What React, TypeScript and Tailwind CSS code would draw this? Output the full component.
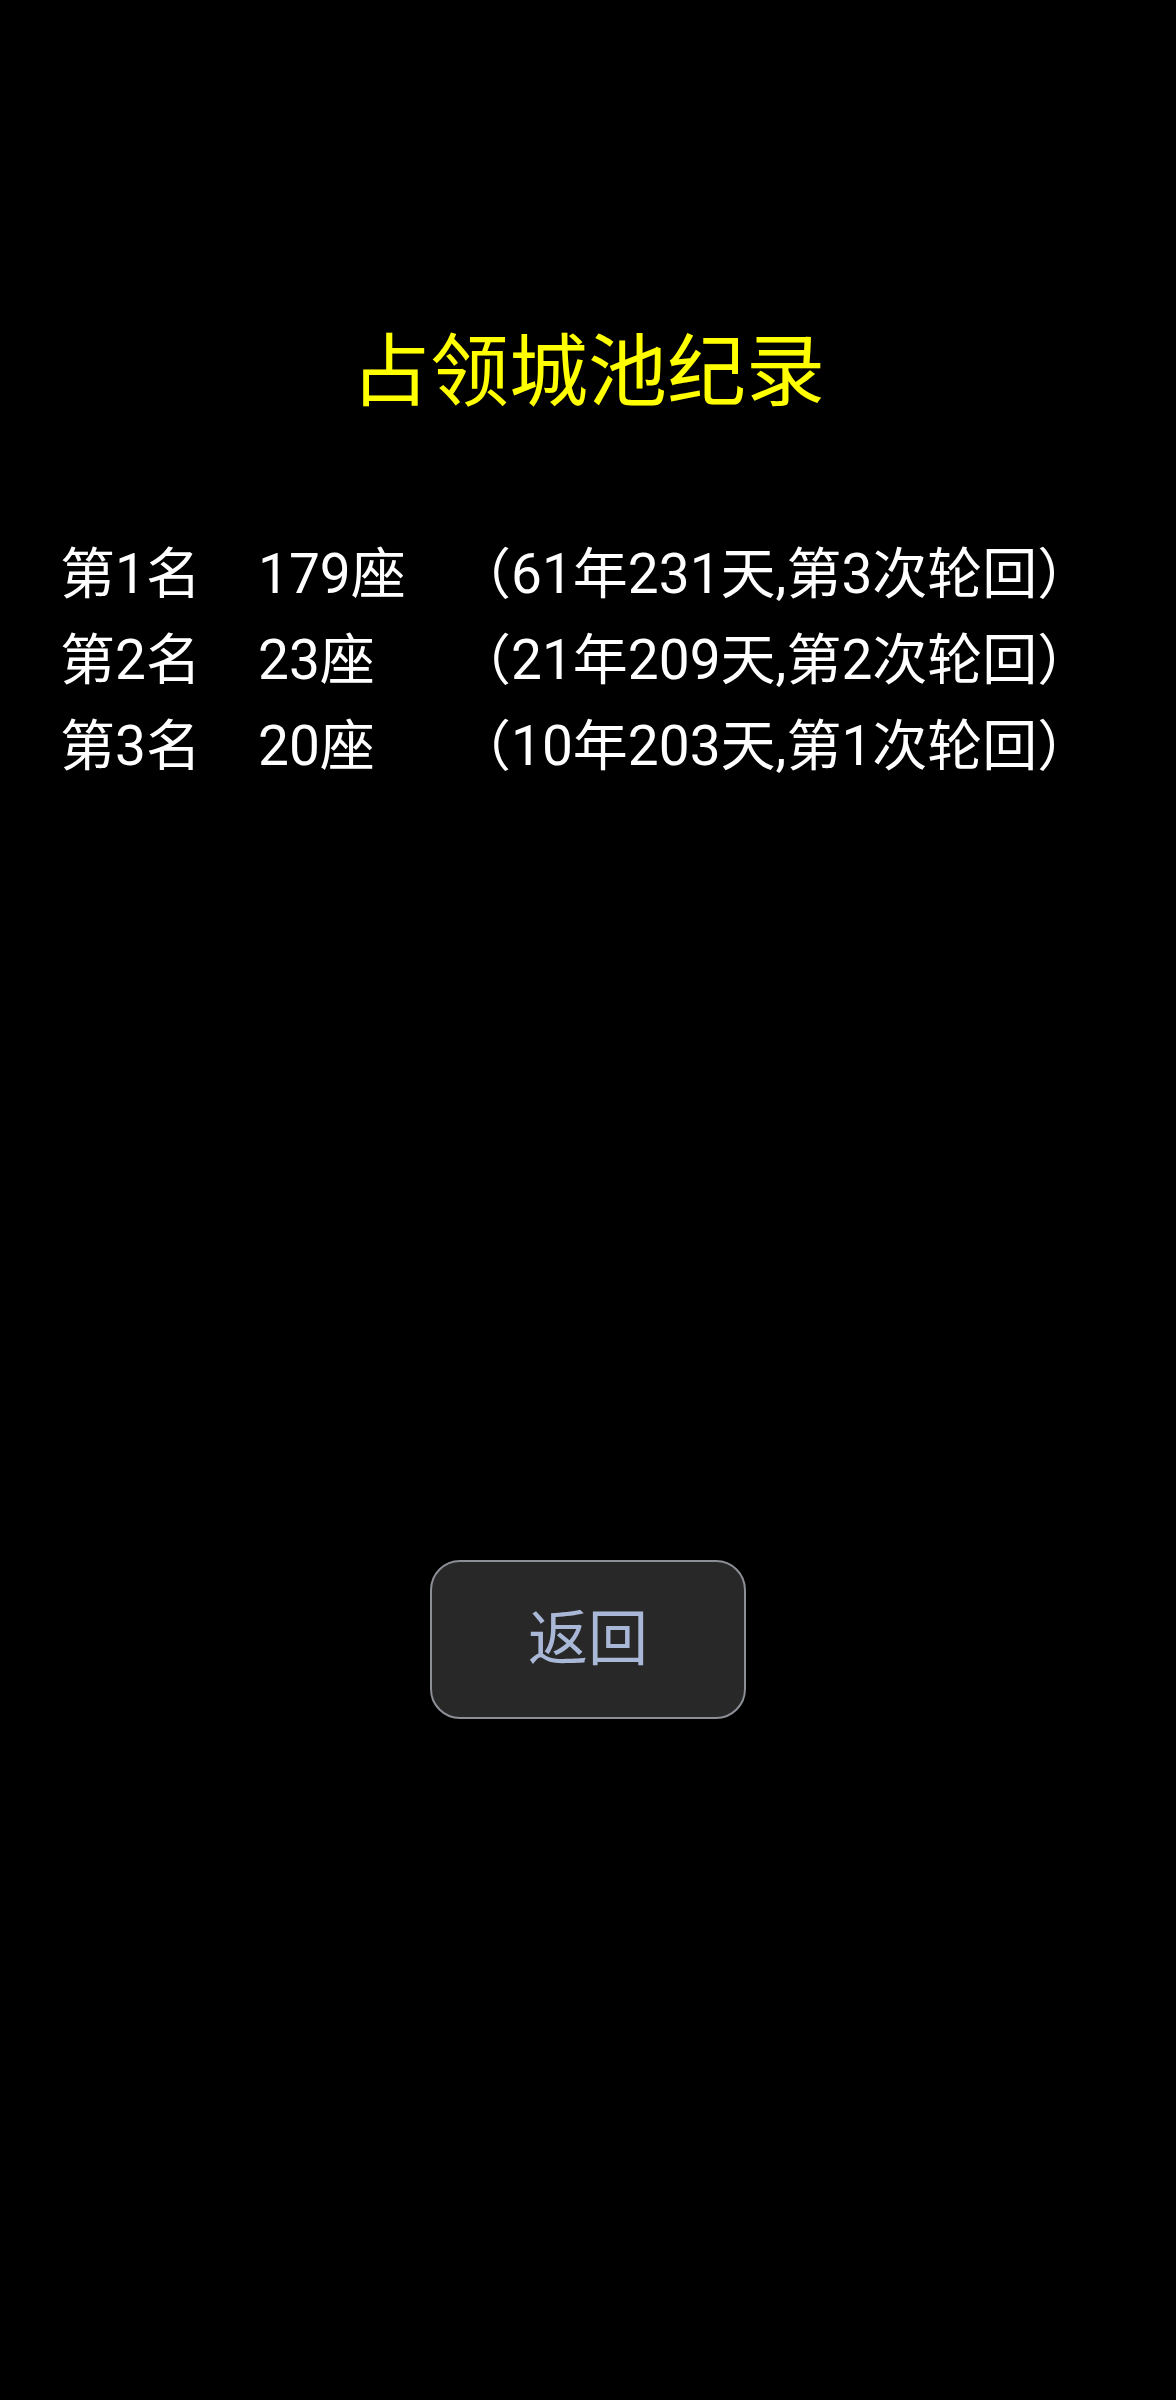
const RECORDS = [
  { rank: "第1名", count: "179座", detail: "（61年231天,第3次轮回）" },
  { rank: "第2名", count: "23座", detail: "（21年209天,第2次轮回）" },
  { rank: "第3名", count: "20座", detail: "（10年203天,第1次轮回）" },
];

export default function App() {
  return (
    <div
      className="min-h-[2400px] bg-black flex flex-col"
      style={{ fontFamily: 'Roboto, "Noto Sans CJK SC", sans-serif' }}
    >
      <h1 className="pt-[327px] text-center text-[79px] leading-[92px] text-[#ffff00] font-normal">
        占领城池纪录
      </h1>

      <div className="mt-[112px] pl-[60px] flex flex-col text-white text-[55px] leading-[86px]">
        {RECORDS.map((r) => (
          <div key={r.rank} className="flex whitespace-nowrap">
            <span className="w-[198px]">{r.rank}</span>
            <span className="w-[198px]">{r.count}</span>
            <span>{r.detail}</span>
          </div>
        ))}
      </div>

      <button className="mt-[771px] mx-auto w-[316px] h-[159px] rounded-[30px] border-2 border-[#8c8f96] bg-[#282828] text-[60px] text-[#aab8d8]">
        返回
      </button>
    </div>
  );
}
